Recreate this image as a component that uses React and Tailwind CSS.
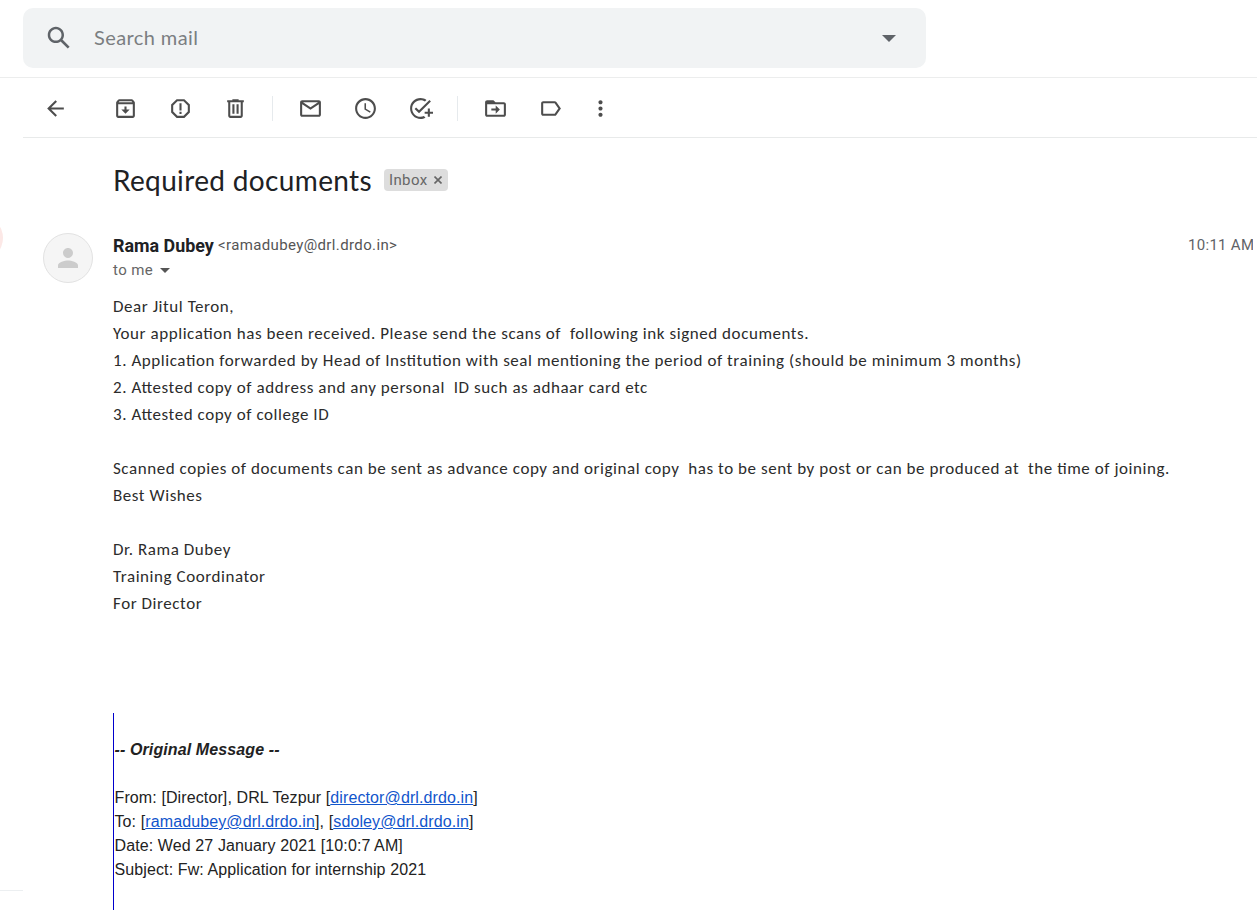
function Icon({ d, className, children }) {
  return (
    <svg viewBox="0 0 24 24" fill="currentColor" className={className}>
      {d && <path d={d} />}
      {children}
    </svg>
  );
}

const paths = {
  search:
    'M20.49 19l-5.73-5.73C15.53 12.2 16 10.91 16 9.5 16 5.91 13.09 3 9.5 3S3 5.91 3 9.5 5.91 16 9.5 16c1.41 0 2.7-.47 3.77-1.24L19 20.49 20.49 19zM5 9.5C5 7.01 7.01 5 9.5 5S14 7.01 14 9.5 11.99 14 9.5 14 5 11.99 5 9.5z',
  back: 'M20 11H7.83l5.59-5.59L12 4l-8 8 8 8 1.41-1.41L7.83 13H20v-2z',
  archive:
    'M20.54 5.23l-1.39-1.68C18.88 3.21 18.47 3 18 3H6c-.47 0-.88.21-1.16.55L3.46 5.23C3.17 5.57 3 6.02 3 6.5V19c0 1.1.9 2 2 2h14c1.1 0 2-.9 2-2V6.5c0-.48-.17-.93-.46-1.27zM6.24 5h11.52l.83 1H5.42l.82-1zM5 19V8h14v11H5zm8-9h-2v3H8l4 4 4-4h-3v-3z',
  spam:
    'M15.73 3H8.27L3 8.27v7.46L8.27 21h7.46L21 15.73V8.27L15.73 3zM19 14.9L14.9 19H9.1L5 14.9V9.1L9.1 5h5.8L19 9.1v5.8zM11 7h2v7h-2zM11 15.2h2v2h-2z',
  trash:
    'M15 4V3H9v1H4v2h1v13c0 1.1.9 2 2 2h10c1.1 0 2-.9 2-2V6h1V4h-5zm2 15H7V6h10v13zM9 8h2v9H9zM13 8h2v9h-2z',
  mail:
    'M20 4H4c-1.1 0-2 .9-2 2v12c0 1.1.9 2 2 2h16c1.1 0 2-.9 2-2V6c0-1.1-.9-2-2-2zm-.8 2L12 10.8 4.8 6h14.4zM4 18V7.87l8 5.33 8-5.33V18H4z',
  clock:
    'M11.99 2C6.47 2 2 6.48 2 12s4.47 10 9.99 10C17.52 22 22 17.52 22 12S17.52 2 11.99 2zM12 20c-4.42 0-8-3.58-8-8s3.58-8 8-8 8 3.58 8 8-3.58 8-8 8zM12.5 7H11v6l5.25 3.15.75-1.23-4.5-2.67z',
  task:
    'M22 5.18L10.59 16.6l-4.24-4.24 1.41-1.41 2.83 2.83 10-10L22 5.18zM12 20c-4.41 0-8-3.59-8-8s3.59-8 8-8c1.57 0 3.04.46 4.28 1.25l1.45-1.45C16.1 2.67 14.13 2 12 2 6.48 2 2 6.48 2 12s4.48 10 10 10c1.73 0 3.36-.44 4.78-1.22l-1.5-1.5c-1 .46-2.11.72-3.28.72zm7-5h-3v2h3v3h2v-3h3v-2h-3v-3h-2v3z',
  move:
    'M20 6h-8l-2-2H4c-1.1 0-1.99.9-1.99 2L2 18c0 1.1.9 2 2 2h16c1.1 0 2-.9 2-2V8c0-1.1-.9-2-2-2zm0 12H4V8h16v10zM12.2 17l4-4-4-4v3H8v2h4.2z',
  label:
    'M16 5H5c-1.1 0-2 .9-2 2v10c0 1.1.9 2 2 2h11c.67 0 1.27-.33 1.63-.84L22 12l-4.37-6.16C17.27 5.33 16.67 5 16 5zm0 12H5V7h11l3.55 5L16 17z',
  more:
    'M12 8c1.1 0 2-.9 2-2s-.9-2-2-2-2 .9-2 2 .9 2 2 2zm0 2c-1.1 0-2 .9-2 2s.9 2 2 2 2-.9 2-2-.9-2-2-2zm0 6c-1.1 0-2 .9-2 2s.9 2 2 2 2-.9 2-2-.9-2-2-2z',
  person:
    'M12 12c2.21 0 4-1.79 4-4s-1.79-4-4-4-4 1.79-4 4 1.79 4 4 4zm0 2c-2.67 0-8 1.34-8 4v2h16v-2c0-2.66-5.33-4-8-4z',
};

function Tool({ d, className = '' }) {
  return <Icon d={d} className={`size-[25px] shrink-0 ${className}`} />;
}

const body = [
  'Dear Jitul Teron,',
  'Your application has been received. Please send the scans of  following ink signed documents.',
  '1. Application forwarded by Head of Institution with seal mentioning the period of training (should be minimum 3 months)',
  '2. Attested copy of address and any personal  ID such as adhaar card etc',
  '3. Attested copy of college ID',
  '',
  'Scanned copies of documents can be sent as advance copy and original copy  has to be sent by post or can be produced at  the time of joining.',
  'Best Wishes',
  '',
  'Dr. Rama Dubey',
  'Training Coordinator',
  'For Director',
];

function Mail({ children }) {
  return <a className="text-[#1155cc] underline">{children}</a>;
}

export default function App() {
  return (
    <div className="flex h-[910px] w-[1257px] flex-col overflow-hidden bg-white font-['Roboto',sans-serif] text-[#222]">
      <header className="flex h-[78px] shrink-0 border-b border-[#eceded] pt-2 pl-[23px]">
        <div className="flex h-[60px] w-[903px] items-center rounded-[10px] bg-[#f1f3f4] pr-[30px] pl-[21px] text-[#5f6368]">
          <Icon d={paths.search} className="size-[30px]" />
          <span className="ml-5 flex-1 pb-0.5 font-['Lato',sans-serif] text-[20px] tracking-[0.4px] text-[#7b7e81]">Search mail</span>
          <svg viewBox="0 0 14 7" className="h-[7px] w-[14px]" fill="#5f6368"><path d="M0 0h14L7 7z" /></svg>
        </div>
      </header>

      <div className="flex min-h-0 flex-1">
        <aside className="flex w-[23px] shrink-0 flex-col overflow-hidden">
          <div className="mt-[137px] -ml-[43px] size-[46px] shrink-0 rounded-full bg-[#fce8e6]" />
          <div className="mt-[629px] h-px shrink-0 bg-[#eceff1]" />
        </aside>

        <main className="flex min-w-0 flex-1 flex-col">
          <nav className="flex h-[60px] shrink-0 items-center border-b border-[#e8eaea] pt-0.5 pl-5 text-[#4d4d4d]">
            <Tool d={paths.back} />
            <Tool d={paths.archive} className="ml-[45px]" />
            <Tool d={paths.spam} className="ml-[30px]" />
            <Tool d={paths.trash} className="ml-[30px]" />
            <div className="ml-6 h-[25px] w-px bg-[#e6eaed]" />
            <Tool d={paths.mail} className="ml-[25px]" />
            <Tool d={paths.clock} className="ml-[30px]" />
            <Tool d={paths.task} className="ml-[30px]" />
            <div className="ml-6 h-[25px] w-px bg-[#e6eaed]" />
            <Tool d={paths.move} className="ml-[25px]" />
            <Tool d={paths.label} className="ml-[30px]" />
            <Tool d={paths.more} className="ml-[25px]" />
          </nav>

          <div className="flex h-[85px] shrink-0 items-center pl-[90px]">
            <h1 className="w-[271px] pb-0.5 font-['Lato',sans-serif] text-[28px] tracking-[0.35px] whitespace-nowrap text-[#202124]">Required documents</h1>
            <div className="mb-0.5 flex h-[22px] w-16 items-center rounded bg-[#ddd] pl-[5px] text-[15px] text-[#666]">
              <span className="w-[45px] pt-0.5 tracking-[0.37px]">Inbox</span>
              <svg viewBox="0 0 8 8" className="size-2" stroke="#666" strokeWidth="1.6"><path d="M.5.5l7 7M7.5.5l-7 7" /></svg>
            </div>
          </div>

          <div className="flex h-[70px] shrink-0 pt-[10px] pl-5">
            <div className="flex size-[50px] items-center justify-center rounded-full border border-[#e2e2e2] bg-[#f5f5f5] text-[#ccc]">
              <Icon d={paths.person} className="size-[30px]" />
            </div>
            <div className="ml-5 flex-1">
              <div className="flex h-6 items-center">
                <span className="w-[105px] pt-0.5 text-[17.9px] font-bold whitespace-nowrap text-[#202124]">Rama Dubey</span>
                <span className="text-[15px] tracking-[0.37px] text-[#555]">&lt;ramadubey@drl.drdo.in&gt;</span>
                <span className="mr-1 ml-auto h-6 w-[65px] overflow-hidden text-[15px] leading-6 tracking-[0.3px] whitespace-nowrap text-[#5f6368]">10:11 AM</span>
              </div>
              <div className="flex h-6 items-center pt-0.5 text-[15px] tracking-[0.37px] text-[#666]">
                to me
                <svg viewBox="0 0 10 5" className="mt-px ml-[7px] h-[5px] w-[10px]" fill="#555"><path d="M0 0h10L5 5z" /></svg>
              </div>
            </div>
          </div>

          <div className="flex-1 pl-[90px]">
            <div className="font-['Carlito','Lato',sans-serif] text-[17px] leading-[27px] tracking-[0.56px] whitespace-pre text-[#2c2c2c] [font-feature-settings:'liga'_1]">
              {body.map((text, i) => (
                <div key={i} className="h-[27px]">{text}</div>
              ))}
            </div>
            <div className="mt-[96px] h-[220px] border-l border-[#00c] pt-[25px] pl-[0.5px] font-['Liberation_Sans',Arial,sans-serif] text-[16px] leading-6 tracking-[0.11px]">
              <div className="mb-6 font-bold italic">-- Original Message --</div>
              <div>From: [Director], DRL Tezpur [<Mail>director@drl.drdo.in</Mail>]</div>
              <div>To: [<Mail>ramadubey@drl.drdo.in</Mail>], [<Mail>sdoley@drl.drdo.in</Mail>]</div>
              <div>Date: Wed 27 January 2021 [10:0:7 AM]</div>
              <div>Subject: Fw: Application for internship 2021</div>
            </div>
          </div>
        </main>
      </div>
    </div>
  );
}
